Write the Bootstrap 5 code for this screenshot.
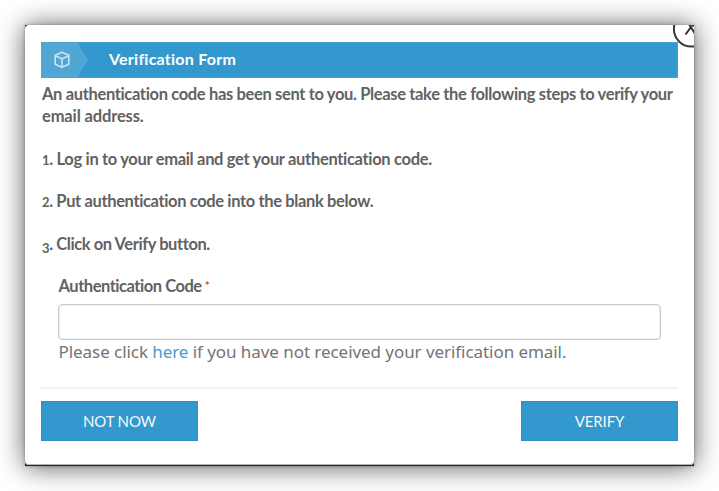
<!DOCTYPE html>
<html lang="en">
<head>
<meta charset="utf-8">
<meta name="viewport" content="width=device-width, initial-scale=1">
<title>Verification Form</title>
<link href="https://cdn.jsdelivr.net/npm/bootstrap@5.3.0/dist/css/bootstrap.min.css" rel="stylesheet">
<style>
  body { font-family: Lato, "Open Sans", sans-serif; font-size: 16px; color: #626262; background: #fff; }
  .stage { width: 719px; height: 491px; padding: 25px; }
  .backdrop-edge { width: 669px; height: 441px; background: #222; box-shadow: 0 0 3px rgba(0,0,0,.3), 0 1px 25px rgba(0,0,0,.65); }
  .dialog { height: 440px; border-radius: 4px; padding: 17px 16px 0; box-shadow: inset 0 -1px #b5b5b5; }
  .close-ring { top: -15px; right: -16px; }
  .title-bar { height: 36px; background: #3398cd; border: 1px solid #41a2d6; }
  .title-bar svg { display: block; margin: -1px 0 0 -1px; }
  .title-text { font-size: 16px; line-height: 31px; font-weight: 700; margin-left: 20px; letter-spacing: .24px; }
  .copy { font-size: 16.5px; font-weight: 700; line-height: 22px; padding: 5px 0 0 1px; white-space: nowrap; }
  .step { margin-top: 20.5px; }
  .l1 { letter-spacing: -.35px; }
  .l2 { letter-spacing: -.14px; }
  .l3 { letter-spacing: -.32px; }
  .l4 { letter-spacing: -.37px; }
  .l5 { letter-spacing: -.42px; }
  .num { font-size: 13px; line-height: 0; }
  .num-low { position: relative; top: 3px; }
  .field { padding: 21px 17px 0; }
  .field label { font-size: 16.5px; font-weight: 700; line-height: 20px; letter-spacing: -.47px; padding-left: .5px; }
  .req { color: #f33; font-size: 12px; line-height: 0; vertical-align: 2px; margin-left: 3px; }
  .code-input { height: 36px; border: 1px solid #cbcbcb; border-radius: 4px; margin-top: 8px; padding: 4px 10px; box-shadow: inset 0 0 0 1px #ececec; }
  .hint { font-family: "Noto Sans", sans-serif; font-size: 17px; line-height: 24px; letter-spacing: -.06px; color: #747474; white-space: nowrap; padding-left: .5px; }
  .hint a { color: #469bd3; }
  .rule { height: 2px; background: #f1f1f1; margin-top: 23px; }
  .action { width: 157px; height: 40px; border: 1px solid #2b91c8; border-radius: 0; background: #3398cd; color: #f2f8fc; font-size: 15px; line-height: 38px; padding: 0; letter-spacing: -.15px; }
  .action:hover { background: #2b8bbd; color: #fff; }
</style>
</head>
<body>
<main class="stage overflow-hidden">
  <div class="backdrop-edge">
    <section class="dialog bg-white position-relative overflow-hidden">
      <svg class="close-ring position-absolute" width="38" height="38" viewBox="0 0 38 38" role="button" aria-label="Close">
        <circle cx="19.5" cy="19" r="17.6" fill="#fff" stroke="#3b3b3b" stroke-width="2"/>
        <path d="M13.5 24.5L23.5 11M15 11L23.5 24.5" fill="none" stroke="#333" stroke-width="2"/>
      </svg>
      <header class="title-bar d-flex text-white position-relative">
        <svg width="48" height="36" viewBox="0 0 48 36" aria-hidden="true">
          <path d="M0 0H36L47 18L36 36H0Z" fill="#51a7d4"/>
          <g fill="none" stroke="#c9e5f4" stroke-width="1.6" stroke-linejoin="round">
            <path d="M21 10.3L27.8 13.3V22.3L21 25.2L14.2 22.3V13.3Z"/>
            <path d="M14.4 13.8L21 16.8L27.6 13.8M21 16.8V25"/>
          </g>
        </svg>
        <div class="title-text">Verification Form</div>
      </header>
      <div class="copy">
        <div class="l1">An authentication code has been sent to you. Please take the following steps to verify your</div>
        <div class="l2">email address.</div>
        <div class="step l3"><span class="num">1</span>. Log in to your email and get your authentication code.</div>
        <div class="step l4"><span class="num">2</span>. Put authentication code into the blank below.</div>
        <div class="step l5"><span class="num num-low">3</span>. Click on Verify button.</div>
      </div>
      <div class="field">
        <label class="d-block" for="code">Authentication Code<span class="req">*</span></label>
        <input id="code" class="form-control code-input" type="text">
        <div class="hint">Please click <a href="#" class="text-decoration-none">here</a> if you have not received your verification email.</div>
      </div>
      <div class="rule"></div>
      <div class="d-flex justify-content-between pt-2 mt-1">
        <button class="btn action" type="button">NOT NOW</button>
        <button class="btn action" type="button">VERIFY</button>
      </div>
    </section>
  </div>
</main>
<script src="https://cdn.jsdelivr.net/npm/bootstrap@5.3.0/dist/js/bootstrap.bundle.min.js"></script>
</body>
</html>
